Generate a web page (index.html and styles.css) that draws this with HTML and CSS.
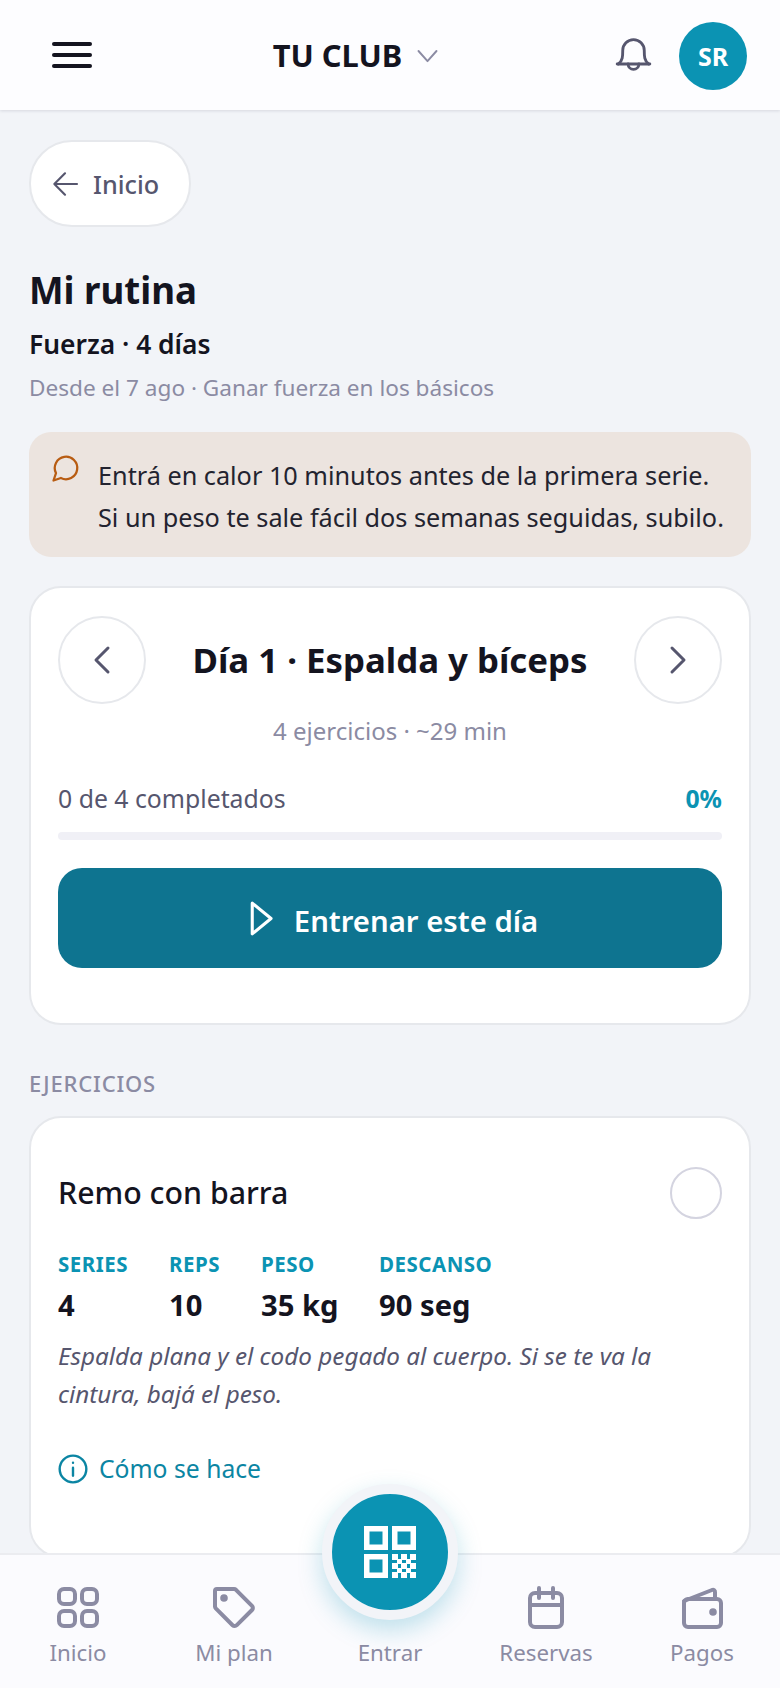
FILE: index.html
```html
<!DOCTYPE html>
<html lang="es">
<head>
<meta charset="utf-8">
<title>Mi rutina</title>
<link rel="stylesheet" href="styles.css">
</head>
<body>
<header class="topbar">
  <button class="burger" aria-label="Menú"><span></span><span></span><span></span></button>
  <div class="club">
    <span class="club-name">TU CLUB</span>
    <svg class="club-chev" viewBox="0 0 24 24"><path d="M4 8l8 9 8-9"/></svg>
  </div>
  <div class="top-actions">
    <svg class="bell" viewBox="0 0 24 24"><path d="M9 15.600a3 3 0 0 0 6 0"/><path d="M2.900 15.600h18.200"/><path d="M3.500 15.600C6 14 6 11 6 8a6 6 0 0 1 12 0c0 3 0 6 2.500 7.600"/></svg>
    <div class="avatar">SR</div>
  </div>
</header>

<main class="page">
  <a class="back">
    <svg class="back-arrow" viewBox="0 0 24 24"><path d="M12 4l-8 8 8 8M4 12h17"/></svg>
    <span>Inicio</span>
  </a>

  <h1 class="title">Mi rutina</h1>
  <p class="subtitle">Fuerza · 4 días</p>
  <p class="meta">Desde el 7 ago · Ganar fuerza en los básicos</p>

  <section class="tip">
    <svg class="tip-icon" viewBox="0 0 24 24"><path d="M7.900 20A9 9 0 1 0 4 16.100L2 22z"/></svg>
    <p>Entrá en calor 10 minutos antes de la primera serie.<br>Si un peso te sale fácil dos semanas seguidas, subilo.</p>
  </section>

  <section class="card day">
    <div class="day-head">
      <button class="round"><svg viewBox="0 0 24 24"><path d="M16 4l-8 8 8 8"/></svg></button>
      <h2>Día 1 · Espalda y bíceps</h2>
      <button class="round"><svg viewBox="0 0 24 24"><path d="M8 4l8 8-8 8"/></svg></button>
    </div>
    <p class="day-sub">4 ejercicios · ~29 min</p>
    <div class="progress-row"><span>0 de 4 completados</span><b>0%</b></div>
    <div class="bar"></div>
    <button class="cta">
      <svg viewBox="0 0 24 24"><path d="M6 3l11 9-11 9z"/></svg>
      <span>Entrenar este día</span>
    </button>
  </section>

  <h3 class="section-label">EJERCICIOS</h3>

  <section class="card exercise">
    <div class="ex-head">
      <h4>Remo con barra</h4>
      <span class="check"></span>
    </div>
    <div class="stats">
      <div class="stat s1"><small>SERIES</small><strong>4</strong></div>
      <div class="stat s2"><small>REPS</small><strong>10</strong></div>
      <div class="stat s3"><small>PESO</small><strong>35 kg</strong></div>
      <div class="stat"><small>DESCANSO</small><strong>90 seg</strong></div>
    </div>
    <p class="note">Espalda plana y el codo pegado al cuerpo. Si se te va la cintura, bajá el peso.</p>
    <a class="how">
      <svg viewBox="0 0 24 24"><circle cx="12" cy="12" r="10"/><path d="M12 17v-6M12 7.300h.01"/></svg>
      <span>Cómo se hace</span>
    </a>
  </section>
</main>

<nav class="tabbar">
  <a class="tab">
    <svg viewBox="0 0 24 24"><rect x="2.500" y="2.500" width="8" height="7.500" rx="2.500"/><rect x="14" y="2.500" width="7.500" height="7.500" rx="2.500"/><rect x="2.500" y="13.500" width="8" height="7.500" rx="2.500"/><rect x="14" y="13.500" width="7.500" height="7.500" rx="2.500"/></svg>
    <span>Inicio</span>
  </a>
  <a class="tab">
    <svg viewBox="0 0 24 24"><path d="M3.500 2.500H12a1.500 1.500 0 0 1 1 .4l8 8a1.500 1.500 0 0 1 0 2.100l-7.600 7.600a1.500 1.500 0 0 1-2.100 0L2.900 12.200a1.500 1.500 0 0 1-.4-1V3.500a1 1 0 0 1 1-1z"/><circle class="dot" cx="7" cy="7" r=".9"/></svg>
    <span>Mi plan</span>
  </a>
  <a class="tab tab-main">
    <span class="fab">
      <svg viewBox="0 0 52 52">
        <path fill-rule="evenodd" d="M0 0h24v24H0zM5.500 5.500v13h13v-13zM28 0h24v24H28zM33.500 5.500v13h13v-13zM0 28h24v24H0zM5.500 33.500v13h13v-13z"/>
        <path d="M28 28h6v6h-6zM37 28h6v6h-6zM46 28h6v6h-6zM33 33h5v5h-5zM42 33h5v5h-5zM28 37h6v6h-6zM37 37h6v6h-6zM46 37h6v6h-6zM33 42h5v5h-5zM42 42h5v5h-5zM28 46h6v6h-6zM37 46h6v6h-6zM46 46h6v6h-6z"/>
      </svg>
    </span>
    <span>Entrar</span>
  </a>
  <a class="tab">
    <svg viewBox="0 0 24 24"><rect x="4" y="4.500" width="16" height="17" rx="2.500"/><path d="M8.500 2v5M15.500 2v5M4 10.500h16"/></svg>
    <span>Reservas</span>
  </a>
  <a class="tab">
    <svg viewBox="0 0 24 24"><path d="M3 8.500L17 3a1 1 0 0 1 1.500 1v3.500"/><rect x="3" y="7.500" width="18.500" height="14" rx="2"/><circle class="dot" cx="17.500" cy="14" r=".9"/></svg>
    <span>Pagos</span>
  </a>
</nav>
</body>
</html>
```

FILE: styles.css
```css
* { box-sizing: border-box; margin: 0; padding: 0; }
html, body { height: 1688px; overflow: hidden; }
body {
  position: relative;
  background: #f2f4f8;
  font-family: "Noto Sans", "Open Sans", sans-serif;
  color: #14141f;
}
button { font: inherit; border: 0; background: none; color: inherit; }
svg { display: block; fill: none; stroke: currentColor; stroke-linecap: round; stroke-linejoin: round; }

.topbar {
  height: 110px;
  background: #fdfdff;
  box-shadow: 0 1px 3px rgba(20, 20, 50, .12);
  padding: 0 33px 0 52px;
  display: flex;
  justify-content: space-between;
  align-items: center;
}
.burger { width: 40px; height: 26px; display: flex; flex-direction: column; justify-content: space-between; }
.burger span { height: 4px; border-radius: 2px; background: #14141f; }
.club { display: flex; align-items: center; gap: 12px; margin-left: 10px; }
.club-name { font-size: 30.800px; font-weight: 700; }
.club-chev { width: 27px; height: 27px; color: #8b8ba3; stroke-width: 1.700; }
.top-actions { display: flex; align-items: center; gap: 24px; margin-top: 2px; }
.bell { width: 43px; height: 43px; color: #56566e; stroke-width: 1.600; margin-top: 2px; }
.avatar {
  width: 68px; height: 68px; border-radius: 50%;
  background: #0b93b3; color: #fff;
  display: flex; align-items: center; justify-content: center;
  font-size: 25px; font-weight: 700;
}

.page { padding: 30px 29px 0; }
.back {
  width: 162px; height: 87px;
  border-radius: 43px;
  background: #fff;
  border: 2px solid #e6e8ec;
  padding-left: 18px;
  display: flex; align-items: center; gap: 12px;
  color: #56566e; font-size: 25.200px; font-weight: 500;
}
.back-arrow { width: 32px; height: 32px; stroke-width: 1.600; }
.title { font-size: 36.700px; font-weight: 700; line-height: 50px; margin-top: 38px; }
.subtitle { font-size: 26.400px; font-weight: 600; line-height: 34px; margin-top: 11.500px; }
.meta { font-size: 22.600px; line-height: 30px; color: #8b8ba3; margin-top: 12px; }

.tip {
  margin-top: 29.500px;
  height: 125px;
  background: #ece4df;
  border-radius: 22px;
  padding: 22px 20px 0 22px;
  display: flex; gap: 17px;
}
.tip-icon { width: 30px; height: 30px; color: #b85c12; stroke-width: 1.800; flex: none; margin-top: -1px; }
.tip p { font-size: 25.250px; line-height: 42px; color: #23232f; white-space: nowrap; }

.card { background: #fff; border: 2px solid #e6e8ec; border-radius: 32px; }
.day { margin-top: 29px; height: 439px; padding: 28px 27px 0; }
.day-head { display: flex; align-items: center; justify-content: space-between; }
.day-head h2 { font-size: 34.800px; font-weight: 700; line-height: 88px; white-space: nowrap; }
.round {
  width: 88px; height: 88px; border-radius: 50%;
  border: 2px solid #e6e8ec; background: #fff; color: #56566e;
  display: flex; align-items: center; justify-content: center;
}
.round svg { width: 36px; height: 36px; stroke-width: 2; }
.day-sub { text-align: center; font-size: 24px; line-height: 32px; color: #8b8ba3; margin-top: 11px; }
.progress-row { display: flex; justify-content: space-between; font-size: 24.800px; line-height: 34px; color: #56566e; margin-top: 34px; }
.progress-row b { color: #0b93b3; font-weight: 700; }
.bar { height: 8px; border-radius: 4px; background: #f0f0f6; margin-top: 17px; }
.cta {
  width: 100%; height: 100px; margin-top: 28px;
  border-radius: 24px; background: #0e7490; color: #fff;
  display: flex; align-items: center; justify-content: center; gap: 11px;
  font-size: 29.300px; font-weight: 600;
}
.cta span { padding-top: 6px; }
.cta svg { width: 41px; height: 41px; stroke-width: 1.800; }

.section-label { font-size: 22px; font-weight: 500; letter-spacing: .8px; line-height: 30px; color: #8b8ba3; margin-top: 43px; }

.exercise { margin-top: 18px; height: 442px; padding: 49px 27px 0; }
.ex-head { display: flex; align-items: center; justify-content: space-between; height: 52px; }
.ex-head h4 { font-size: 30.300px; font-weight: 500; position: relative; top: -1px; }
.check { width: 52px; height: 52px; border-radius: 50%; border: 2px solid #d4d4e0; }
.stats { display: flex; gap: 40px; margin-top: 32px; }
.stat { display: flex; flex-direction: column; }
.s1 { width: 71px; }
.s2 { width: 52px; }
.s3 { width: 78px; }
.stat small { font-size: 20.500px; font-weight: 700; color: #0b93b3; letter-spacing: .5px; line-height: 26px; }
.stat strong { font-size: 29.200px; font-weight: 700; line-height: 38px; margin-top: 9px; }
.note { font-size: 24.250px; font-style: italic; line-height: 38px; color: #56566e; margin-top: 13px; }
.how { display: flex; align-items: center; gap: 10px; color: #0b85a3; font-size: 24.700px; line-height: 34px; margin-top: 39px; }
.how svg { width: 32px; height: 32px; stroke-width: 1.800; margin-left: -1px; }

.tabbar {
  position: absolute; left: 0; right: 0; bottom: 0;
  height: 135px;
  background: #fbfbfe;
  border-top: 2px solid #ebecf0;
  display: grid;
  grid-template-columns: repeat(5, 156px);
}
.tab {
  display: flex; flex-direction: column; align-items: center;
  padding-top: 29px;
  color: #8b8ba3; font-size: 22.300px; line-height: 32px;
}
.tab > svg { width: 48px; height: 48px; stroke-width: 2; margin-bottom: 5px; }
.tab .dot { fill: currentColor; }
.tab-main { padding-top: 82px; }
.fab {
  position: absolute; top: -71px; left: 322px;
  width: 136px; height: 136px; border-radius: 50%;
  background: #0b93b3; border: 10px solid #f2f4f8;
  box-shadow: 0 10px 24px rgba(11, 147, 179, .25);
  display: flex; align-items: center; justify-content: center;
  color: #fff;
}
.fab svg { width: 52px; height: 52px; fill: #fff; stroke: none; }
```
